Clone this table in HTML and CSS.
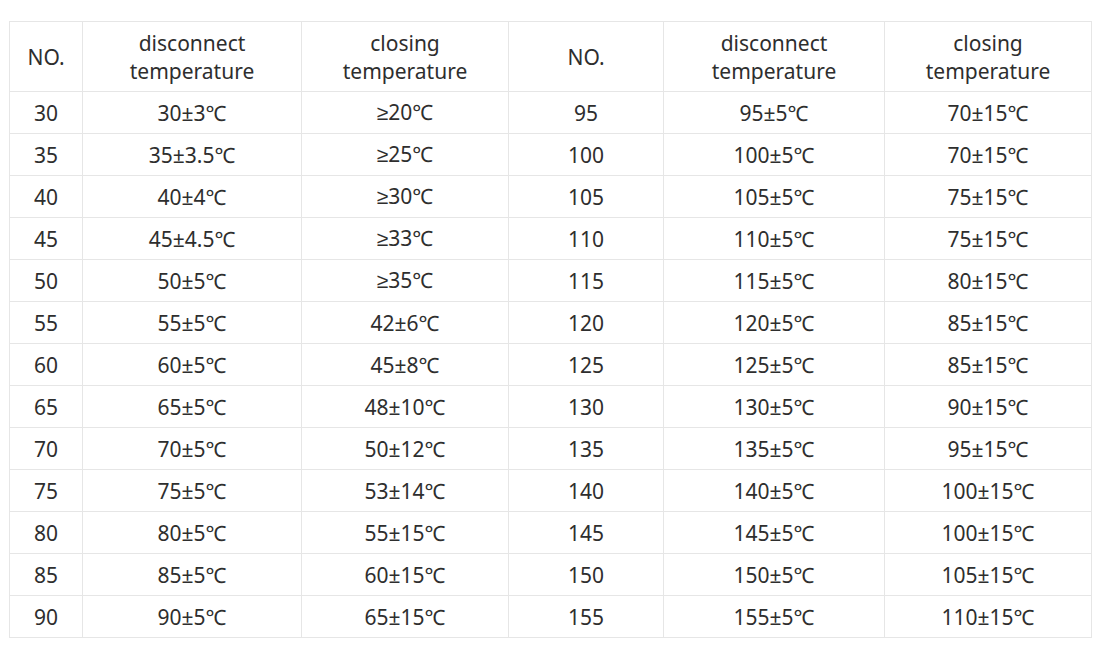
FILE: index.html
```html
<!DOCTYPE html>
<html>
<head>
<meta charset="utf-8">
<link rel="stylesheet" href="styles.css">
</head>
<body>
<div class="wrap">
<table class="spec">
<colgroup>
<col class="c1"><col class="c2"><col class="c3"><col class="c4"><col class="c5"><col class="c6">
</colgroup>
<thead>
<tr><th>NO.</th><th>disconnect<br>temperature</th><th>closing<br>temperature</th><th>NO.</th><th>disconnect<br>temperature</th><th>closing<br>temperature</th></tr>
</thead>
<tbody>
<tr><td>30</td><td>30±3℃</td><td><span class="ge">≥</span>20℃</td><td>95</td><td>95±5℃</td><td>70±15℃</td></tr>
<tr><td>35</td><td>35±3.5℃</td><td><span class="ge">≥</span>25℃</td><td>100</td><td>100±5℃</td><td>70±15℃</td></tr>
<tr><td>40</td><td>40±4℃</td><td><span class="ge">≥</span>30℃</td><td>105</td><td>105±5℃</td><td>75±15℃</td></tr>
<tr><td>45</td><td>45±4.5℃</td><td><span class="ge">≥</span>33℃</td><td>110</td><td>110±5℃</td><td>75±15℃</td></tr>
<tr><td>50</td><td>50±5℃</td><td><span class="ge">≥</span>35℃</td><td>115</td><td>115±5℃</td><td>80±15℃</td></tr>
<tr><td>55</td><td>55±5℃</td><td>42±6℃</td><td>120</td><td>120±5℃</td><td>85±15℃</td></tr>
<tr><td>60</td><td>60±5℃</td><td>45±8℃</td><td>125</td><td>125±5℃</td><td>85±15℃</td></tr>
<tr><td>65</td><td>65±5℃</td><td>48±10℃</td><td>130</td><td>130±5℃</td><td>90±15℃</td></tr>
<tr><td>70</td><td>70±5℃</td><td>50±12℃</td><td>135</td><td>135±5℃</td><td>95±15℃</td></tr>
<tr><td>75</td><td>75±5℃</td><td>53±14℃</td><td>140</td><td>140±5℃</td><td>100±15℃</td></tr>
<tr><td>80</td><td>80±5℃</td><td>55±15℃</td><td>145</td><td>145±5℃</td><td>100±15℃</td></tr>
<tr><td>85</td><td>85±5℃</td><td>60±15℃</td><td>150</td><td>150±5℃</td><td>105±15℃</td></tr>
<tr><td>90</td><td>90±5℃</td><td>65±15℃</td><td>155</td><td>155±5℃</td><td>110±15℃</td></tr>
</tbody>
</table>
</div>
</body>
</html>
```
FILE: styles.css
```css
html, body {
  margin: 0;
  padding: 0;
  background: #ffffff;
}
.wrap {
  padding: 21px 0 0 9px;
}
.spec {
  border-collapse: collapse;
  table-layout: fixed;
  width: 1083px;
  font-family: "Noto Sans", "Noto Sans CJK SC", sans-serif;
  font-size: 21px;
  color: #2e2e2e;
}
.c1 { width: 73px; }
.c2 { width: 219px; }
.c3 { width: 207px; }
.c4 { width: 155px; }
.c5 { width: 221px; }
.c6 { width: 207px; }
.spec th, .spec td {
  border: 1px solid #e6e6e6;
  text-align: center;
  vertical-align: middle;
  padding: 0;
  font-weight: normal;
}
.spec th {
  height: 68px;
  line-height: 28px;
  padding-top: 1px;
}
.spec td {
  height: 41px;
  line-height: 26px;
}
.ge {
  font-family: "Liberation Sans", sans-serif;
}
```
